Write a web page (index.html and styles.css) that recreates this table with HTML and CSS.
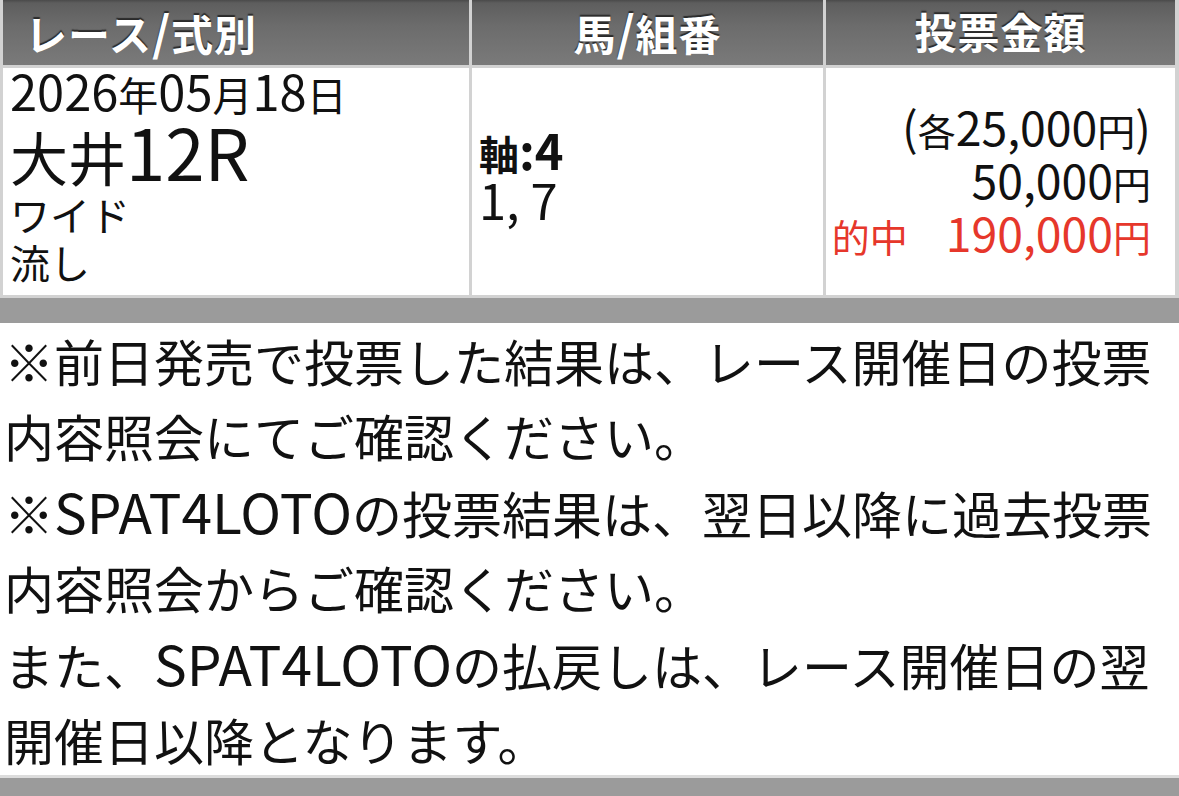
FILE: index.html
```html
<!DOCTYPE html>
<html lang="ja">
<head>
<meta charset="utf-8">
<title>投票内容照会</title>
<link rel="stylesheet" href="styles.css">
</head>
<body>
<div class="bet-table">
  <div class="th th-left">レース<span class="en">/</span>式別</div>
  <div class="th">馬<span class="en">/</span>組番</div>
  <div class="th">投票金額</div>

  <div class="td race">
    <div class="date"><span class="en">2026</span>年<span class="en">05</span>月<span class="en">18</span>日</div>
    <div class="venue">大井<span class="en">12R</span></div>
    <div class="kind">ワイド</div>
    <div class="kind">流し</div>
  </div>
  <div class="td horses">
    <div class="axis">軸<span class="en">:4</span></div>
    <div class="pair"><span class="en">1, 7</span></div>
  </div>
  <div class="td amount">
    <div><span class="en">(</span>各<span class="en">25,000</span>円<span class="en">)</span></div>
    <div><span class="en">50,000</span>円</div>
    <div class="hit">的中&#12288;<span class="en">190,000</span>円</div>
  </div>
</div>
<div class="band"></div>
<div class="notes">
  <p>※前日発売で投票した結果は、レース開催日の投票内容照会にてご確認ください。</p>
  <p>※<span class="en">SPAT4LOTO</span>の投票結果は、翌日以降に過去投票内容照会からご確認ください。</p>
  <p>また、<span class="en">SPAT4LOTO</span>の払戻しは、レース開催日の翌開催日以降となります。</p>
</div>
<div class="footer-band"></div>
</body>
</html>
```
FILE: styles.css
```css
* { box-sizing: border-box; }
html, body {
  margin: 0;
  padding: 0;
  background: #fff;
}
body {
  width: 1179px;
  height: 796px;
  overflow: hidden;
  font-family: "Noto Sans CJK JP", "Noto Sans", sans-serif;
  color: #111;
}
.en {
  font-size: 1.22em;
}
.bet-table {
  display: grid;
  grid-template-columns: 466px 351px 1fr;
  grid-template-rows: 65px 227px;
  column-gap: 3px;
  row-gap: 3px;
  background: #d2d2d2;
  padding: 0 4px 3px 3px;
}
.th {
  background: linear-gradient(#4a4a4a 0, #5e5e5e 3px, #6c6c6c 40%, #7a7a7a 100%);
  color: #fff;
  font-weight: 700;
  font-size: 42px;
  line-height: 62px;
  text-align: center;
  text-shadow: 0 -2px 1px #2a2a2a;
  letter-spacing: 1px;
  white-space: nowrap;
}
.th .en {
  font-size: 1.12em;
}
.th-left {
  text-align: left;
  padding-left: 22px;
}
.td {
  background: #fff;
  white-space: nowrap;
}
.race {
  padding: 0 7px;
  font-size: 40px;
}
.date { line-height: 44px; }
.venue { font-size: 58px; line-height: 68px; }
.kind { line-height: 48px; }
.horses {
  display: flex;
  flex-direction: column;
  justify-content: center;
  padding: 0 7px 12px;
  font-size: 40px;
  line-height: 46px;
}
.axis { font-weight: 700; }
.amount {
  display: flex;
  flex-direction: column;
  justify-content: center;
  align-items: flex-end;
  padding: 4px 24px 6px 0;
  font-size: 38px;
  line-height: 49px;
}
.hit { color: #e6372b; }
.band {
  height: 25px;
  background: #9b9b9b;
}
.notes {
  padding: 0 0 0 4px;
  height: 452px;
}
.notes p {
  margin: 0;
  font-size: 50px;
  line-height: 75px;
}
.notes .en {
  font-size: 1.1em;
}
.footer-band {
  height: 27px;
  background: #9b9b9b;
  border-top: 3px solid #dcdcdc;
}
```
